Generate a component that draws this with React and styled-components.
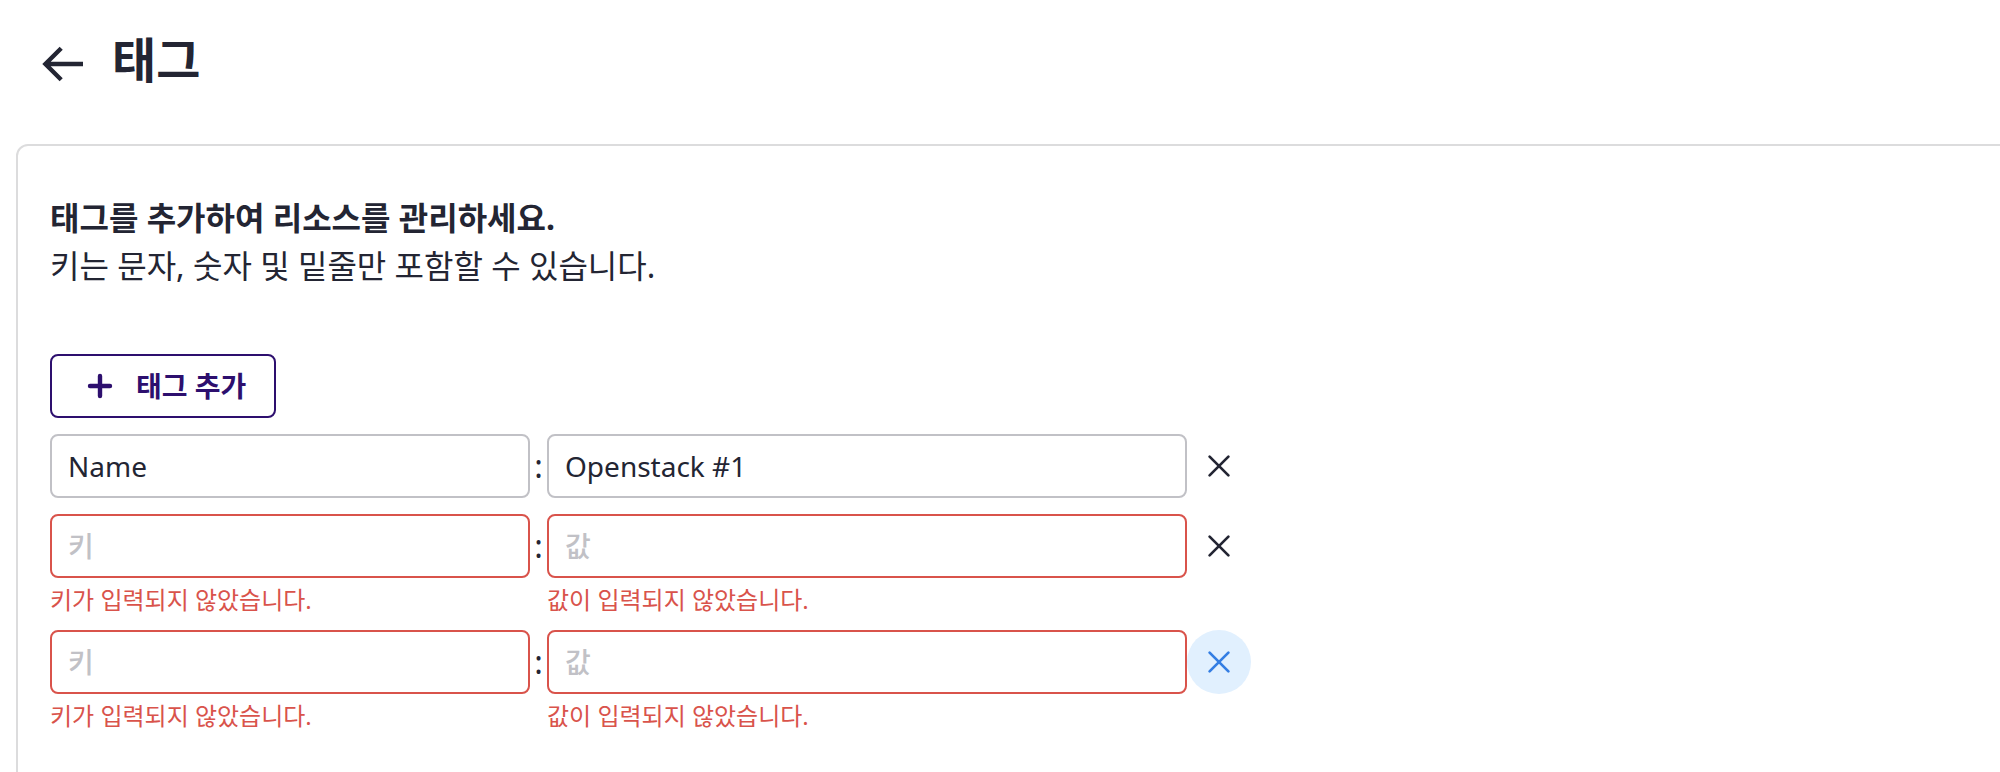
import React from "react";
import styled, { createGlobalStyle } from "styled-components";

const GlobalStyle = createGlobalStyle`
  *, *::before, *::after { box-sizing: border-box; }
  body {
    margin: 0;
    background: #fff;
    color: #232533;
    font-family: "Noto Sans", "Noto Sans CJK KR", sans-serif;
    overflow: hidden;
  }
`;

const Page = styled.main`
  height: 772px;
  padding-left: 16px;
  display: flex;
  flex-direction: column;
  overflow: hidden;
`;

const Header = styled.header`
  flex: none;
  height: 144px;
  padding: 28px 0 0 16px;
  display: flex;
  align-items: flex-start;
`;

const BackButton = styled.button`
  width: 64px;
  height: 64px;
  margin: 4px 16px 0 0;
  padding: 0;
  border: 0;
  background: none;
  color: inherit;
  svg { display: block; }
`;

const Title = styled.h1`
  margin: 0;
  font-size: 48px;
  line-height: 64px;
  font-weight: 700;
`;

const Panel = styled.section`
  flex: none;
  width: 2016px;
  height: 700px;
  padding: 48px 32px;
  border: 2px solid #dcdcdd;
  border-radius: 12px;
  display: flex;
  flex-direction: column;
  align-items: flex-start;
`;

const Description = styled.p`
  margin: 0;
  font-size: 32px;
  line-height: 48px;
  font-weight: ${({ $strong }) => ($strong ? 700 : 400)};
`;

const AddButton = styled.button`
  width: 226px;
  height: 64px;
  margin: 64px 0 16px;
  padding: 0 0 0 32px;
  border: 2px solid #2d0f6e;
  border-radius: 8px;
  background: #fff;
  color: #2d0f6e;
  display: flex;
  align-items: center;
  gap: 20px;
  font: 700 28px/40px "Noto Sans", "Noto Sans CJK KR", sans-serif;
  white-space: nowrap;
  svg { flex: none; }
`;

const TagList = styled.div`
  display: flex;
  flex-direction: column;
  gap: 16px;
`;

const TagRow = styled.div`
  display: flex;
  align-items: flex-start;
`;

const Field = styled.div`
  width: ${({ $width }) => $width}px;
  display: flex;
  flex-direction: column;
`;

const Input = styled.input`
  width: 100%;
  height: 64px;
  padding: 0 16px;
  border: 2px solid ${({ $invalid }) => ($invalid ? "#d9534b" : "#c1c1c6")};
  border-radius: 8px;
  outline: 0;
  background: #fff;
  color: #232533;
  font: 400 28px/40px "Noto Sans", "Noto Sans CJK KR", sans-serif;
  &::placeholder { color: #c1c1c6; opacity: 1; font-weight: 500; }
`;

const ErrorText = styled.span`
  height: 32px;
  margin-top: 4px;
  color: #d9534b;
  font-size: 24px;
  line-height: 36px;
  font-weight: 400;
  white-space: nowrap;
`;

const Colon = styled.span`
  width: 17px;
  line-height: 64px;
  font-size: 32px;
  text-align: center;
`;

const RemoveButton = styled.button`
  width: 64px;
  height: 64px;
  padding: 0;
  border: 0;
  border-radius: 50%;
  display: grid;
  place-items: center;
  background: ${({ $active }) => ($active ? "#e1f0fe" : "transparent")};
  color: ${({ $active }) => ($active ? "#347ee3" : "#232533")};
`;

const ArrowLeft = () => (
  <svg width="64" height="64" viewBox="0 0 64 64" fill="none" stroke="currentColor" strokeWidth="4.4">
    <path d="M51 32H13.5M29.2 16.2L13.4 32L29.2 47.8" />
  </svg>
);

const Plus = () => (
  <svg width="32" height="32" viewBox="0 0 32 32" fill="none" stroke="currentColor" strokeWidth="4.4" strokeLinecap="round">
    <path d="M16 6V26M6 16H26" />
  </svg>
);

const Cross = () => (
  <svg width="32" height="32" viewBox="0 0 32 32" fill="none" stroke="currentColor" strokeWidth="2.7" strokeLinecap="round">
    <path d="M6.6 6.6L25.4 25.4M25.4 6.6L6.6 25.4" />
  </svg>
);

const tags = [
  { key: "Name", value: "Openstack #1" },
  { key: "", value: "" },
  { key: "", value: "", active: true },
];

function TagField({ width, value, placeholder, error }) {
  const invalid = !value;
  return (
    <Field $width={width}>
      <Input defaultValue={value} placeholder={placeholder} $invalid={invalid} />
      {invalid && <ErrorText>{error}</ErrorText>}
    </Field>
  );
}

export default function App() {
  return (
    <>
      <GlobalStyle />
      <Page>
        <Header>
          <BackButton aria-label="뒤로"><ArrowLeft /></BackButton>
          <Title>태그</Title>
        </Header>
        <Panel>
          <Description $strong>태그를 추가하여 리소스를 관리하세요.</Description>
          <Description>키는 문자, 숫자 및 밑줄만 포함할 수 있습니다.</Description>
          <AddButton><Plus />태그 추가</AddButton>
          <TagList>
            {tags.map((tag, i) => (
              <TagRow key={i}>
                <TagField width={480} value={tag.key} placeholder="키" error="키가 입력되지 않았습니다." />
                <Colon>:</Colon>
                <TagField width={640} value={tag.value} placeholder="값" error="값이 입력되지 않았습니다." />
                <RemoveButton aria-label="삭제" $active={tag.active}><Cross /></RemoveButton>
              </TagRow>
            ))}
          </TagList>
        </Panel>
      </Page>
    </>
  );
}
